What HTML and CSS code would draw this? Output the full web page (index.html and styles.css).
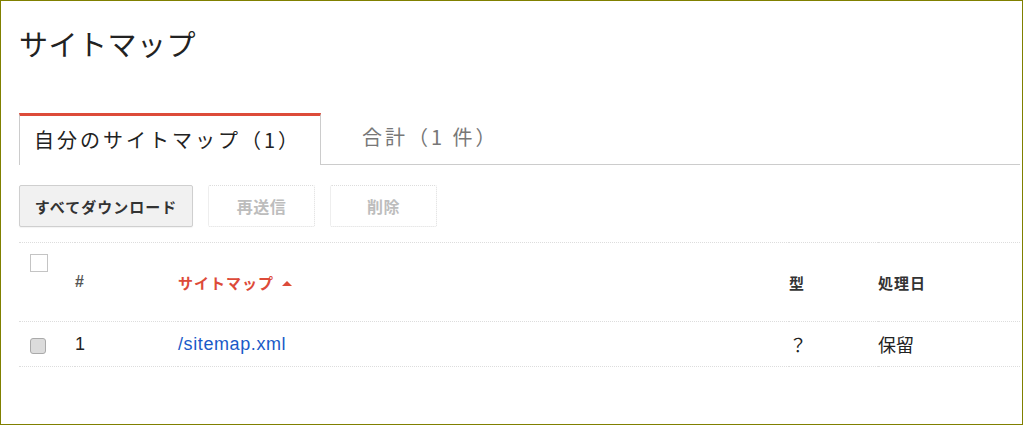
FILE: index.html
```html
<!DOCTYPE html>
<html>
    <head>
        <title>サイトマップ</title>
        <meta charset="utf-8" />
        <link rel="stylesheet" href="styles.css">
    </head>
    <body>
        <article class="frame">
            <h1 class="title">サイトマップ</h1>

            <nav class="tabs">
                <div class="tab active">自分のサイトマップ（1）</div>
                <div class="tab">合計（1 件）</div>
            </nav>

            <section class="actions">
                <button class="btn primary">すべてダウンロード</button>
                <button class="btn disabled">再送信</button>
                <button class="btn disabled">削除</button>
            </section>

            <table class="list">
                <colgroup>
                    <col class="c-check">
                    <col class="c-num">
                    <col class="c-path">
                    <col class="c-type">
                    <col>
                </colgroup>
                <thead>
                    <tr>
                        <th class="check"><span class="box"></span></th>
                        <th class="num">#</th>
                        <th class="sorted">サイトマップ <span class="arrow"></span></th>
                        <th>型</th>
                        <th>処理日</th>
                    </tr>
                </thead>
                <tbody>
                    <tr>
                        <td class="check"><span class="box off"></span></td>
                        <td class="latin">1</td>
                        <td class="latin"><a href="#">/sitemap.xml</a></td>
                        <td>？</td>
                        <td>保留</td>
                    </tr>
                </tbody>
            </table>
        </article>
    </body>
</html>
```

FILE: styles.css
```css
* {
    margin: 0;
    padding: 0;
    box-sizing: border-box;
}
body {
    font-family: "Noto Sans CJK JP", sans-serif;
    color: #222;
    background: #fff;
}
.frame {
    width: 1023px;
    height: 425px;
    border: 1px solid #808000;
    padding: 0 2px 0 18px;
}
.title {
    font-size: 29px;
    font-weight: normal;
    letter-spacing: 0.5px;
    line-height: 40px;
    padding-top: 22px;
    color: #222;
}
.tabs {
    display: flex;
    margin-top: 50px;
    height: 52px;
    border-bottom: 1px solid #ccc;
}
.tab {
    height: 51px;
    font-size: 20px;
    letter-spacing: 3px;
    line-height: 48px;
    color: #777;
    padding-left: 41px;
}
.tab.active {
    width: 302px;
    height: 52px;
    padding-left: 14px;
    color: #222;
    background: #fff;
    border-top: 3px solid #dd4b39;
    border-left: 1px solid #ccc;
    border-right: 1px solid #ccc;
}
.actions {
    display: flex;
    gap: 15px;
    margin-top: 20px;
}
.btn {
    height: 42px;
    font-family: "Noto Sans CJK JP", sans-serif;
    font-size: 15px;
    font-weight: bold;
    letter-spacing: 1px;
    border-radius: 2px;
    background: #fff;
}
.btn.primary {
    width: 174px;
    color: #333;
    background: #f1f1f1;
    border: 1px solid #cfcfcf;
    box-shadow: 0 1px 1px rgba(0, 0, 0, 0.05);
}
.btn.disabled {
    width: 107px;
    font-size: 16px;
    letter-spacing: 0.5px;
    color: #bdbdbd;
    border: 1px dotted #ddd;
}
.list {
    width: 1001px;
    margin-top: 15px;
    border-collapse: collapse;
    table-layout: fixed;
}
.c-check { width: 56px; }
.c-num { width: 103px; }
.c-path { width: 611px; }
.c-type { width: 89px; }
th, td {
    text-align: left;
    vertical-align: middle;
    border-top: 1px dotted #ddd;
    border-bottom: 1px dotted #ddd;
}
th {
    height: 79px;
    font-size: 15px;
    font-weight: bold;
    letter-spacing: 1px;
    color: #333;
}
th.check {
    vertical-align: top;
    padding: 11px 0 0 11px;
}
th.num {
    font-family: "Liberation Sans", sans-serif;
    font-size: 16px;
    color: #555;
}
th.sorted {
    color: #dd4b39;
}
.arrow {
    display: inline-block;
    width: 0;
    height: 0;
    margin-left: 4px;
    vertical-align: 3px;
    border-left: 5px solid transparent;
    border-right: 5px solid transparent;
    border-bottom: 5px solid #dd4b39;
}
td {
    height: 45px;
    font-size: 18px;
    color: #222;
}
td.check {
    padding-left: 11px;
    padding-top: 3px;
}
td.latin {
    font-family: "Liberation Sans", "Noto Sans CJK JP", sans-serif;
    letter-spacing: 0.6px;
}
.box {
    display: block;
    width: 18px;
    height: 18px;
    border: 1px solid #c4c4c4;
    background: #fff;
}
.box.off {
    width: 16px;
    height: 16px;
    border: 1px solid #aaa;
    border-radius: 3px;
    background: #dcdcdc;
}
a {
    color: #1a5ac8;
    text-decoration: none;
}
```
